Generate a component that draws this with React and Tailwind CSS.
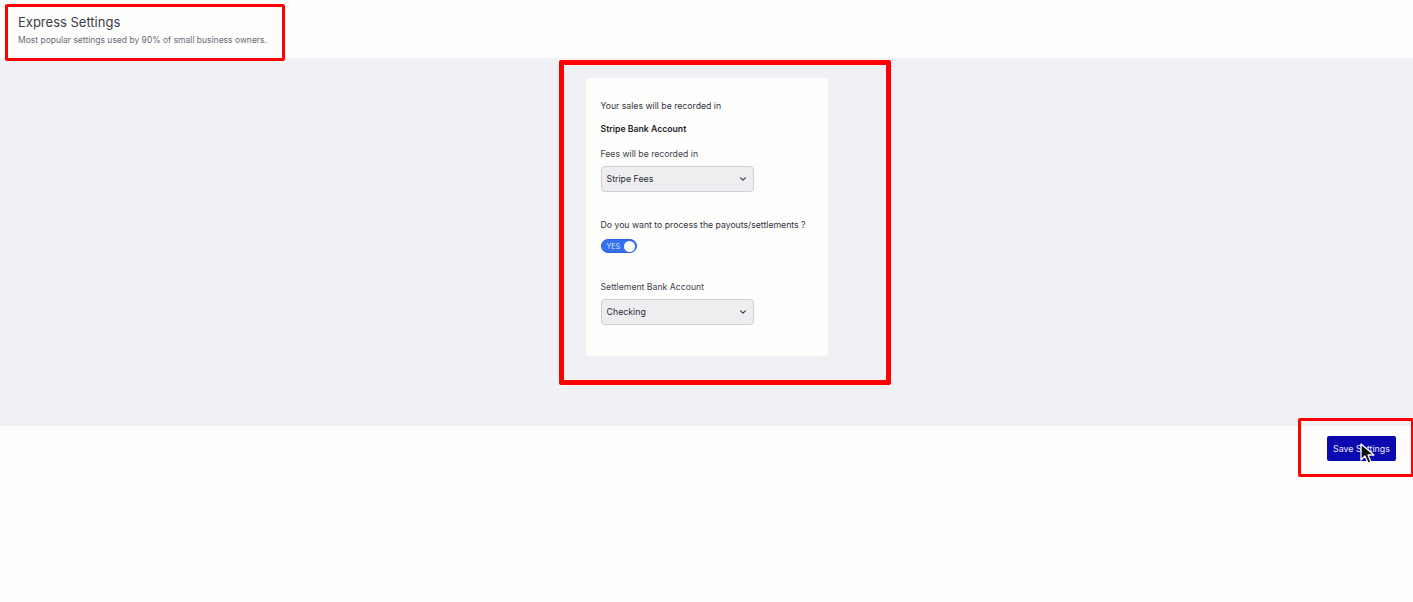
import React, { useState } from "react";

function Select({ value }) {
  return (
    <div className="flex h-[26px] w-[153px] items-center justify-between rounded-[4px] border border-[#cfcfd4] bg-[#eeeef1] pl-[5px] pr-[6px]">
      <span className="text-[8.8px] text-[#2b2b33]">{value}</span>
      <svg width="8" height="8" viewBox="0 0 10 10" fill="none">
        <path d="M2 3.5 L5 6.5 L8 3.5" stroke="#3a3a44" strokeWidth="1.4" strokeLinecap="round" strokeLinejoin="round" />
      </svg>
    </div>
  );
}

export default function App() {
  const [payouts, setPayouts] = useState(true);

  return (
    <div className="relative min-h-[602px] bg-[#fdfdfc] font-['Inter',sans-serif]">
      {/* header */}
      <div className="h-[58px] px-[18px] pt-[14px]">
        <h1 className="text-[13px] leading-[17px] text-[#3d3d48]">Express Settings</h1>
        <p className="mt-[4px] text-[8.5px] leading-[11px] text-[#6b6b76]">
          Most popular settings used by 90% of small business owners.
        </p>
      </div>

      {/* settings band */}
      <div className="flex h-[368px] justify-center bg-[#f1f1f5] pt-[20px]">
        <div className="h-[278px] w-[242px] rounded-[4px] bg-[#fdfdfc] px-[15px] pt-[22px]">
          <p className="text-[8.7px] leading-[12px] text-[#33333c]">Your sales will be recorded in</p>
          <p className="mt-[11px] text-[8.7px] font-semibold leading-[12px] text-[#26262e]">Stripe Bank Account</p>
          <p className="mt-[13px] text-[8.7px] leading-[12px] text-[#43434c]">Fees will be recorded in</p>
          <div className="mt-[6px]">
            <Select value="Stripe Fees" />
          </div>

          <p className="mt-[27px] text-[8.7px] leading-[12px] text-[#33333c]">
            Do you want to process the payouts/settlements ?
          </p>
          <button
            type="button"
            onClick={() => setPayouts(!payouts)}
            className="mt-[8px] flex h-[14px] w-[36px] items-center justify-between rounded-full border border-[#2a5fe0] bg-[#3570ef] pl-[5px] pr-[1px]"
          >
            <span className="text-[7px] leading-none text-[#dfe8ff]">{payouts ? "YES" : "NO"}</span>
            <span className="h-[11px] w-[11px] rounded-full bg-white" />
          </button>

          <p className="mt-[28px] text-[8.7px] leading-[12px] text-[#43434c]">Settlement Bank Account</p>
          <div className="mt-[6px]">
            <Select value="Checking" />
          </div>
        </div>
      </div>

      {/* footer */}
      <div className="flex justify-end pr-[17px] pt-[10px]">
        <button
          type="button"
          className="h-[25px] w-[69px] rounded-[2px] bg-[#0a0ab0] text-[8.9px] text-[#e8e8ff]"
        >
          Save Settings
        </button>
      </div>

      {/* annotation boxes */}
      <div className="pointer-events-none absolute left-[5px] top-[4px] h-[57px] w-[280px] rounded-[2px] border-[3px] border-[#ff0000]" />
      <div className="pointer-events-none absolute left-[559px] top-[60px] h-[325px] w-[332px] rounded-[2px] border-[5px] border-[#ff0000]" />
      <div className="pointer-events-none absolute left-[1298px] top-[418px] h-[59px] w-[116px] rounded-[2px] border-[3px] border-[#ff0000]" />

      {/* cursor */}
      <svg className="pointer-events-none absolute left-[1360px] top-[443px]" width="16" height="22" viewBox="0 0 16 22">
        <path d="M1 1 L1 17 L5 13 L8 20 L11 19 L8 12 L14 12 Z" fill="#111" stroke="#fff" strokeWidth="1.3" strokeLinejoin="round" />
      </svg>
    </div>
  );
}
